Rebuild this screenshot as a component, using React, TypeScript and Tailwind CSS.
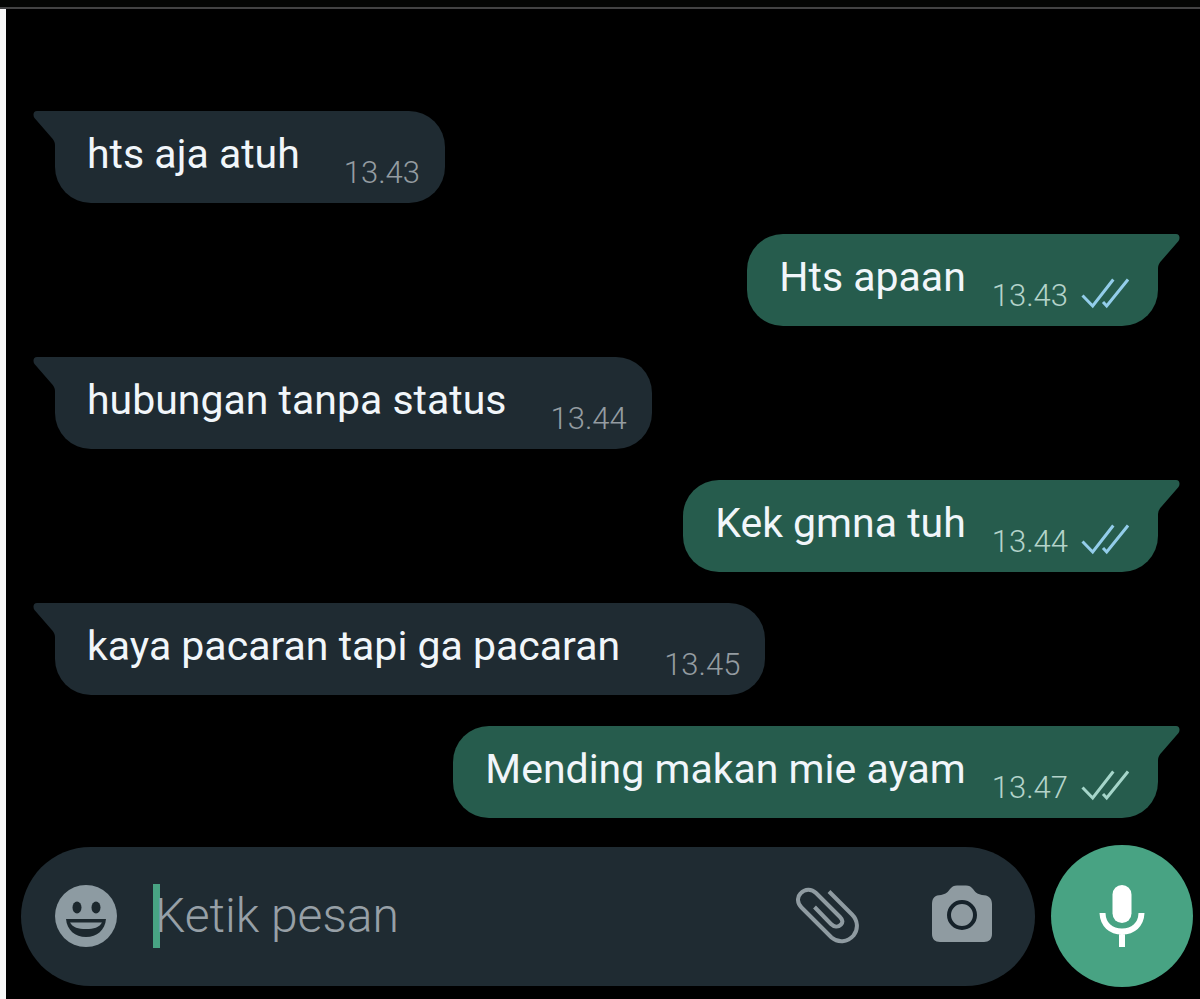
import React from "react";

type Message = {
  text: string;
  time: string;
  from: "them" | "me";
  read?: boolean;
};

const messages: Message[] = [
  { text: "hts aja atuh", time: "13.43", from: "them" },
  { text: "Hts apaan", time: "13.43", from: "me", read: true },
  { text: "hubungan tanpa status", time: "13.44", from: "them" },
  { text: "Kek gmna tuh", time: "13.44", from: "me", read: true },
  { text: "kaya pacaran tapi ga pacaran", time: "13.45", from: "them" },
  { text: "Mending makan mie ayam", time: "13.47", from: "me", read: false },
];

function Ticks({ read }: { read?: boolean }) {
  return (
    <svg
      viewBox="0 0 48 32"
      className={`h-8 w-12 ${read ? "text-[#93cdea]" : "text-[#a5d6ca]"}`}
      fill="none"
      stroke="currentColor"
      strokeWidth="3"
      role="img"
      aria-label={read ? "Dibaca" : "Terkirim"}
    >
      <path d="M1.500 17.500 L11.700 28 L32.300 1.500" />
      <path d="M22 24 L25.700 28 L47 1.500" />
    </svg>
  );
}

function Bubble({ message }: { message: Message }) {
  const mine = message.from === "me";
  return (
    <li className={mine ? "flex justify-end" : "flex justify-start"}>
      <div
        className={
          mine
            ? "relative flex items-start gap-[26px] rounded-[36px] rounded-tr-none bg-[#265c4d] pr-[29px] pl-8"
            : "relative flex items-start gap-11 rounded-[36px] rounded-tl-none bg-[#1f2b32] pr-[25px] pl-8"
        }
      >
        <svg
          viewBox="0 0 24 34"
          aria-hidden="true"
          className={
            mine
              ? "absolute top-0 -right-[22px] h-[34px] w-6 -scale-x-100 text-[#265c4d]"
              : "absolute top-0 -left-[22px] h-[34px] w-6 text-[#1f2b32]"
          }
          fill="currentColor"
        >
          <path d="M24 0 H4 C0.500 0 -0.500 4 1.500 7 L18 26 Q22 30 22 34 H24 Z" />
        </svg>
        <p className="pt-[19px] text-[41px] leading-[48px] text-[#f1f6fa]">{message.text}</p>
        <div className="flex items-start gap-[13px] pt-11 pb-3">
          <time
            className={`text-[31px] leading-9 font-light ${mine ? "text-[#b4d3ca]" : "text-[#949ca1]"}`}
          >
            {message.time}
          </time>
          {mine && <Ticks read={message.read} />}
        </div>
      </div>
    </li>
  );
}

function SmileIcon() {
  return (
    <svg viewBox="0 0 64 64" className="size-16" aria-hidden="true">
      <circle cx="32" cy="32" r="31" fill="#8d9ba2" />
      <ellipse cx="23" cy="23.500" rx="4.500" ry="6" fill="#1c282e" />
      <ellipse cx="42" cy="23.500" rx="4.500" ry="6" fill="#1c282e" />
      <path d="M12 35 H52 C51 46 43 53 32 53 S13 46 12 35 Z" fill="#1c282e" />
      <path d="M16 38.500 H48 C45 43.500 40 45 32 45 S19 43.500 16 38.500 Z" fill="#8d9ba2" />
    </svg>
  );
}

function ClipIcon() {
  return (
    <svg
      viewBox="0 0 64 64"
      className="size-16"
      fill="none"
      stroke="#8f9ba1"
      strokeWidth="4"
      aria-hidden="true"
    >
      <path d="M33 7.500 L56 30.500 C62 36.500 62.500 45 57.500 51.500 C51.500 58.500 42 59 35.500 53.500 L5.500 23.500 C1 19 1 13 4.500 9.500 C9 4.500 15.500 4.500 20 9 L44 33 C47 36 47 38.500 45 40.500 C42 43.500 38 43 35 40 L18.500 23" />
    </svg>
  );
}

function CameraIcon() {
  return (
    <svg viewBox="0 0 64 64" className="size-16" aria-hidden="true">
      <path
        d="M11 11 C16 10 18 8 20 5 C22 2.500 24 1.500 27 1.500 H36 C39 1.500 41 2.500 43 5 C45 8 47 10 52 11 C58 11 62 14 62 20 V50 C62 55 59 58 54 58 H10 C5 58 2 55 2 50 V20 C2 14 5 11 11 11 Z"
        fill="#8f9ba1"
      />
      <circle cx="32" cy="31" r="13" fill="none" stroke="#16222a" strokeWidth="4" />
    </svg>
  );
}

function MicIcon() {
  return (
    <svg viewBox="0 0 48 64" className="h-16 w-12" aria-hidden="true">
      <rect x="14.500" y="1" width="19" height="38" rx="9.500" fill="#fff" />
      <path
        d="M4.500 29 C5 41 13 47.500 24 47.500 S43 41 43.500 29 M24 48 V63"
        fill="none"
        stroke="#fff"
        strokeWidth="6"
      />
    </svg>
  );
}

export default function App() {
  return (
    <div className="flex min-h-screen flex-col bg-black font-['Roboto',sans-serif]">
      <div className="h-[9px] border-b-2 border-[#444444] bg-[#050604]" />
      <main className="flex grow flex-col border-l-6 border-[#f8f8f8] pt-[102px] pb-3">
        <ol className="flex flex-col gap-[31px] pr-[42px] pl-[49px]">
          {messages.map((message) => (
            <Bubble key={message.text} message={message} />
          ))}
        </ol>
        <form
          className="mt-auto flex items-center gap-4 pr-[7px] pl-[15px]"
          onSubmit={(event) => event.preventDefault()}
        >
          <div className="flex h-[139px] min-w-0 grow items-center rounded-full bg-[#1f2b32] pr-[41px] pl-[33px]">
            <button type="button" aria-label="Emoji" className="shrink-0">
              <SmileIcon />
            </button>
            <div className="relative ml-[35px] min-w-0 grow">
              <span
                aria-hidden="true"
                className="absolute inset-y-0 left-0 w-[7px] bg-[#48a383]"
              />
              <input
                type="text"
                aria-label="Ketik pesan"
                placeholder="Ketik pesan"
                className="relative block h-16 w-full bg-transparent pl-0.5 text-[48px] font-light text-white outline-none placeholder:text-[#97a0a7]"
              />
            </div>
            <button type="button" aria-label="Lampirkan" className="shrink-0">
              <ClipIcon />
            </button>
            <button type="button" aria-label="Kamera" className="ml-[70px] shrink-0">
              <CameraIcon />
            </button>
          </div>
          <button
            type="button"
            aria-label="Rekam suara"
            className="flex size-[142px] shrink-0 items-center justify-center rounded-full bg-[#48a383]"
          >
            <MicIcon />
          </button>
        </form>
      </main>
    </div>
  );
}
